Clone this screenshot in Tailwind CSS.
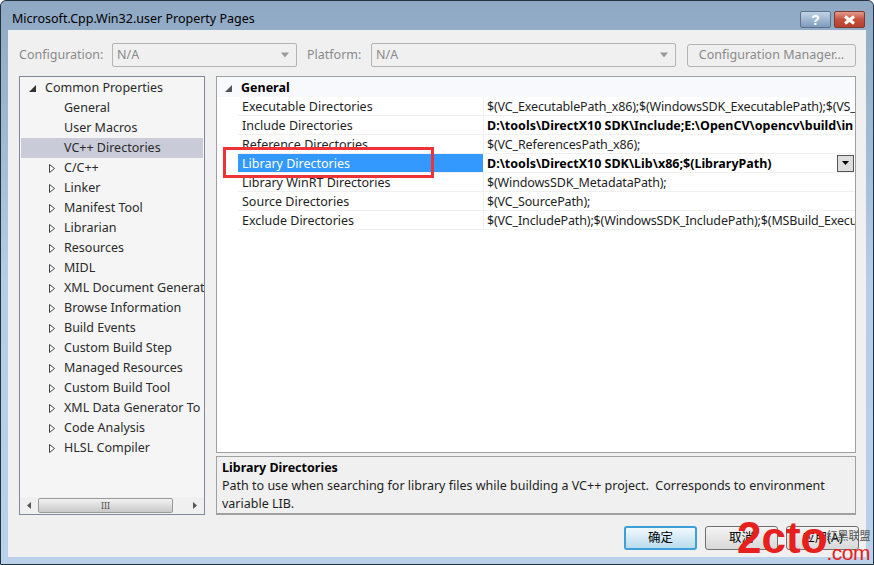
<!DOCTYPE html>
<html lang="en">
<head>
    <meta charset="UTF-8">
    <title>Microsoft.Cpp.Win32.user Property Pages</title>
    <script src="https://cdn.jsdelivr.net/npm/@tailwindcss/browser@4"></script>
</head>
<body class="w-[874px] h-[565px] overflow-hidden bg-white font-['Noto_Sans','Noto_Sans_CJK_SC',sans-serif] text-[12.5px] text-[#1e1e1e]">

    <!-- Window frame -->
    <div class="relative w-[874px] h-[565px] flex flex-col rounded-t-[6px] border border-[#24343f] bg-gradient-to-b from-[#8fa9c4] via-[#b5cde6] to-[#b9d1ea] px-[7px] pb-[7px]">

        <!-- Title bar -->
        <div class="h-[29px] shrink-0 flex items-start justify-between">
            <div class="pl-[4px] pt-[6px] leading-[24px] text-black">Microsoft.Cpp.Win32.user Property Pages</div>
            <div class="flex gap-[3px] pt-[10px] pr-[1px]">
                <div class="w-[31px] h-[17px] flex items-center justify-center rounded-[2px] border border-[#5f7388] bg-gradient-to-b from-[#c2d3e6] to-[#7e9cbd]">
                    <span class="font-['Liberation_Sans',sans-serif] font-bold text-[14px] leading-none text-white">?</span>
                </div>
                <div class="w-[31px] h-[17px] flex items-center justify-center rounded-[2px] border border-[#7a3a34] bg-gradient-to-b from-[#e39a8e] via-[#c4503f] to-[#b8402f]">
                    <svg width="13" height="10" viewBox="0 0 13 10"><path d="M2 1.5 L11 8.5 M11 1.5 L2 8.5" stroke="#fff" stroke-width="3" fill="none"/></svg>
                </div>
            </div>
        </div>

        <!-- Dialog body -->
        <div class="flex-1 min-h-0 flex flex-col bg-[#f0f0f0] pl-[11px] pr-[10px] pt-[13px]">

            <!-- Configuration row -->
            <div class="h-[24px] shrink-0 flex items-center text-[#8a8a8a]">
                <span class="w-[93px]">Configuration:</span>
                <div class="w-[185px] h-[24px] flex items-center justify-between rounded-[2px] border border-[#b4b4b4] pl-[4px] pr-[6px]">
                    <span>N/A</span>
                    <svg width="10" height="6" viewBox="0 0 10 6"><path d="M1 0.5 H9 L5 5.5 Z" fill="#9a9a9a"/></svg>
                </div>
                <span class="ml-[10px] w-[64px]">Platform:</span>
                <div class="w-[305px] h-[24px] flex items-center justify-between rounded-[2px] border border-[#b4b4b4] pl-[4px] pr-[6px]">
                    <span>N/A</span>
                    <svg width="10" height="6" viewBox="0 0 10 6"><path d="M1 0.5 H9 L5 5.5 Z" fill="#9a9a9a"/></svg>
                </div>
                <div class="ml-[11px] w-[169px] h-[23px] flex items-center justify-center rounded-[3px] border border-[#b4b4b4] bg-[#efefef]">Configuration Manager...</div>
            </div>

            <!-- Tree and grid -->
            <div class="flex gap-[11px] mt-[9px]">

                <!-- Tree -->
                <div class="w-[186px] h-[439px] shrink-0 flex flex-col border border-[#82879a] bg-[#f5f5f5]">
                    <div class="flex-1 overflow-hidden pt-[1px] text-[#2a2a2a]">
                        <div class="h-[20px] flex items-center whitespace-nowrap pl-[9px]">
                            <svg class="w-[7px] h-[7px] mr-[9px]" viewBox="0 0 7 7"><path d="M7 0 V7 H0 Z" fill="#333"/></svg>Common Properties
                        </div>
                        <div class="h-[20px] flex items-center pl-[44px]">General</div>
                        <div class="h-[20px] flex items-center pl-[44px]">User Macros</div>
                        <div class="h-[20px] flex items-center pl-[44px] mx-[1px] bg-[#c9cbd9]"><span class="-ml-[1px]">VC++ Directories</span></div>
                        <div class="h-[20px] flex items-center whitespace-nowrap overflow-hidden pl-[29px]"><svg class="w-[6px] h-[9px] mr-[9px] shrink-0" viewBox="0 0 6 9"><path d="M0.5 0.5 L5.5 4.5 L0.5 8.5 Z" fill="#fff" stroke="#444"/></svg>C/C++</div>
                        <div class="h-[20px] flex items-center whitespace-nowrap overflow-hidden pl-[29px]"><svg class="w-[6px] h-[9px] mr-[9px] shrink-0" viewBox="0 0 6 9"><path d="M0.5 0.5 L5.5 4.5 L0.5 8.5 Z" fill="#fff" stroke="#444"/></svg>Linker</div>
                        <div class="h-[20px] flex items-center whitespace-nowrap overflow-hidden pl-[29px]"><svg class="w-[6px] h-[9px] mr-[9px] shrink-0" viewBox="0 0 6 9"><path d="M0.5 0.5 L5.5 4.5 L0.5 8.5 Z" fill="#fff" stroke="#444"/></svg>Manifest Tool</div>
                        <div class="h-[20px] flex items-center whitespace-nowrap overflow-hidden pl-[29px]"><svg class="w-[6px] h-[9px] mr-[9px] shrink-0" viewBox="0 0 6 9"><path d="M0.5 0.5 L5.5 4.5 L0.5 8.5 Z" fill="#fff" stroke="#444"/></svg>Librarian</div>
                        <div class="h-[20px] flex items-center whitespace-nowrap overflow-hidden pl-[29px]"><svg class="w-[6px] h-[9px] mr-[9px] shrink-0" viewBox="0 0 6 9"><path d="M0.5 0.5 L5.5 4.5 L0.5 8.5 Z" fill="#fff" stroke="#444"/></svg>Resources</div>
                        <div class="h-[20px] flex items-center whitespace-nowrap overflow-hidden pl-[29px]"><svg class="w-[6px] h-[9px] mr-[9px] shrink-0" viewBox="0 0 6 9"><path d="M0.5 0.5 L5.5 4.5 L0.5 8.5 Z" fill="#fff" stroke="#444"/></svg>MIDL</div>
                        <div class="h-[20px] flex items-center whitespace-nowrap overflow-hidden pl-[29px]"><svg class="w-[6px] h-[9px] mr-[9px] shrink-0" viewBox="0 0 6 9"><path d="M0.5 0.5 L5.5 4.5 L0.5 8.5 Z" fill="#fff" stroke="#444"/></svg>XML Document Generat</div>
                        <div class="h-[20px] flex items-center whitespace-nowrap overflow-hidden pl-[29px]"><svg class="w-[6px] h-[9px] mr-[9px] shrink-0" viewBox="0 0 6 9"><path d="M0.5 0.5 L5.5 4.5 L0.5 8.5 Z" fill="#fff" stroke="#444"/></svg>Browse Information</div>
                        <div class="h-[20px] flex items-center whitespace-nowrap overflow-hidden pl-[29px]"><svg class="w-[6px] h-[9px] mr-[9px] shrink-0" viewBox="0 0 6 9"><path d="M0.5 0.5 L5.5 4.5 L0.5 8.5 Z" fill="#fff" stroke="#444"/></svg>Build Events</div>
                        <div class="h-[20px] flex items-center whitespace-nowrap overflow-hidden pl-[29px]"><svg class="w-[6px] h-[9px] mr-[9px] shrink-0" viewBox="0 0 6 9"><path d="M0.5 0.5 L5.5 4.5 L0.5 8.5 Z" fill="#fff" stroke="#444"/></svg>Custom Build Step</div>
                        <div class="h-[20px] flex items-center whitespace-nowrap overflow-hidden pl-[29px]"><svg class="w-[6px] h-[9px] mr-[9px] shrink-0" viewBox="0 0 6 9"><path d="M0.5 0.5 L5.5 4.5 L0.5 8.5 Z" fill="#fff" stroke="#444"/></svg>Managed Resources</div>
                        <div class="h-[20px] flex items-center whitespace-nowrap overflow-hidden pl-[29px]"><svg class="w-[6px] h-[9px] mr-[9px] shrink-0" viewBox="0 0 6 9"><path d="M0.5 0.5 L5.5 4.5 L0.5 8.5 Z" fill="#fff" stroke="#444"/></svg>Custom Build Tool</div>
                        <div class="h-[20px] flex items-center whitespace-nowrap overflow-hidden pl-[29px]"><svg class="w-[6px] h-[9px] mr-[9px] shrink-0" viewBox="0 0 6 9"><path d="M0.5 0.5 L5.5 4.5 L0.5 8.5 Z" fill="#fff" stroke="#444"/></svg>XML Data Generator To</div>
                        <div class="h-[20px] flex items-center whitespace-nowrap overflow-hidden pl-[29px]"><svg class="w-[6px] h-[9px] mr-[9px] shrink-0" viewBox="0 0 6 9"><path d="M0.5 0.5 L5.5 4.5 L0.5 8.5 Z" fill="#fff" stroke="#444"/></svg>Code Analysis</div>
                        <div class="h-[20px] flex items-center whitespace-nowrap overflow-hidden pl-[29px]"><svg class="w-[6px] h-[9px] mr-[9px] shrink-0" viewBox="0 0 6 9"><path d="M0.5 0.5 L5.5 4.5 L0.5 8.5 Z" fill="#fff" stroke="#444"/></svg>HLSL Compiler</div>
                    </div>
                    <!-- Horizontal scrollbar -->
                    <div class="h-[17px] shrink-0 flex items-center bg-[#f0f0f0]">
                        <svg class="w-[18px] h-[9px] shrink-0" viewBox="0 0 18 9"><path d="M11 1 V8 L7 4.5 Z" fill="#555"/></svg>
                        <div class="w-[135px] h-[15px] flex items-center justify-center rounded-[2px] border border-[#9a9a9a] bg-gradient-to-b from-[#f2f2f2] to-[#c9c9c9] text-[9px] leading-none text-[#555]">III</div>
                        <div class="flex-1"></div>
                        <svg class="w-[18px] h-[9px] shrink-0" viewBox="0 0 18 9"><path d="M7 1 V8 L11 4.5 Z" fill="#555"/></svg>
                    </div>
                </div>

                <!-- Grid and description -->
                <div class="w-[640px] flex flex-col gap-[3px]">
                    <div class="h-[377px] overflow-hidden border border-[#a0a0a0] bg-white">
                        <div class="h-[20px] flex items-center bg-[#f7f9fc] pl-[8px] pt-[2px] font-bold text-black">
                            <svg class="w-[7px] h-[7px] mr-[9px]" viewBox="0 0 7 7"><path d="M7 0 V7 H0 Z" fill="#555"/></svg>General
                        </div>
                        <div class="h-[19px] flex ml-[21px] border-b border-[#f0f0f0]">
                            <div class="w-[245px] shrink-0 pl-[4px] leading-[20px]">Executable Directories</div>
                            <div class="flex-1 whitespace-nowrap overflow-hidden border-l border-[#f0f0f0] pl-[3px] leading-[20px] tracking-[-0.15px]">$(VC_ExecutablePath_x86);$(WindowsSDK_ExecutablePath);$(VS_</div>
                        </div>
                        <div class="h-[19px] flex ml-[21px] border-b border-[#f0f0f0]">
                            <div class="w-[245px] shrink-0 pl-[4px] leading-[20px]">Include Directories</div>
                            <div class="flex-1 whitespace-nowrap overflow-hidden border-l border-[#f0f0f0] pl-[3px] leading-[20px] font-bold text-black">D:\tools\DirectX10 SDK\Include;E:\OpenCV\opencv\build\in</div>
                        </div>
                        <div class="h-[19px] flex ml-[21px] border-b border-[#f0f0f0]">
                            <div class="w-[245px] shrink-0 pl-[4px] leading-[20px]">Reference Directories</div>
                            <div class="flex-1 whitespace-nowrap overflow-hidden border-l border-[#f0f0f0] pl-[3px] leading-[20px] tracking-[-0.15px]">$(VC_ReferencesPath_x86);</div>
                        </div>
                        <div class="h-[19px] flex ml-[21px] border-b border-[#f0f0f0]">
                            <div class="w-[245px] shrink-0 pl-[4px] leading-[20px] bg-[#3399ff] text-white">Library Directories</div>
                            <div class="flex-1 flex items-center justify-between whitespace-nowrap overflow-hidden pl-[4px] pr-[1px] font-bold text-black">
                                <span class="mt-[2px]">D:\tools\DirectX10 SDK\Lib\x86;$(LibraryPath)</span>
                                <div class="w-[17px] h-[17px] flex items-center justify-center border border-[#555] bg-[#dedede]">
                                    <svg width="7" height="4" viewBox="0 0 7 4"><path d="M0 0 H7 L3.5 4 Z" fill="#000"/></svg>
                                </div>
                            </div>
                        </div>
                        <div class="h-[19px] flex ml-[21px] border-b border-[#f0f0f0]">
                            <div class="w-[245px] shrink-0 pl-[4px] leading-[20px]">Library WinRT Directories</div>
                            <div class="flex-1 whitespace-nowrap overflow-hidden border-l border-[#f0f0f0] pl-[3px] leading-[20px] tracking-[-0.15px]">$(WindowsSDK_MetadataPath);</div>
                        </div>
                        <div class="h-[19px] flex ml-[21px] border-b border-[#f0f0f0]">
                            <div class="w-[245px] shrink-0 pl-[4px] leading-[20px]">Source Directories</div>
                            <div class="flex-1 whitespace-nowrap overflow-hidden border-l border-[#f0f0f0] pl-[3px] leading-[20px] tracking-[-0.15px]">$(VC_SourcePath);</div>
                        </div>
                        <div class="h-[19px] flex ml-[21px] border-b border-[#f0f0f0]">
                            <div class="w-[245px] shrink-0 pl-[4px] leading-[20px]">Exclude Directories</div>
                            <div class="flex-1 whitespace-nowrap overflow-hidden border-l border-[#f0f0f0] pl-[3px] leading-[20px] tracking-[-0.15px]">$(VC_IncludePath);$(WindowsSDK_IncludePath);$(MSBuild_Execu</div>
                        </div>
                    </div>
                    <div class="h-[59px] border border-[#a0a0a0] border-b-2 bg-[#f0f0f0] pl-[5px] pt-[2px] leading-[18px]">
                        <div class="font-bold text-black">Library Directories</div>
                        <div class="w-[620px]">Path to use when searching for library files while building a VC++ project.&nbsp; Corresponds to environment variable LIB.</div>
                    </div>
                </div>
            </div>

            <!-- Footer buttons -->
            <div class="flex justify-end gap-[8px] mt-[11px] -mr-[3px]">
                <div class="w-[73px] h-[24px] flex items-center justify-center rounded-[3px] border-2 border-[#3c9fd8] bg-gradient-to-b from-[#f2f9fd] to-[#b9dcee] text-black">确定</div>
                <div class="w-[73px] h-[24px] flex items-center justify-center rounded-[3px] border border-[#707070] bg-gradient-to-b from-[#f4f4f4] to-[#d8d8d8] text-black">取消</div>
                <div class="w-[73px] h-[24px] flex items-center justify-center rounded-[3px] border border-[#707070] bg-gradient-to-b from-[#f4f4f4] to-[#d8d8d8] text-black">应用(A)</div>
            </div>
        </div>

        <!-- Red callout around the selected row -->
        <div class="absolute left-[222px] top-[146px] w-[211px] h-[31px] border-[3px] border-[#ee3338]"></div>

        <!-- Watermark -->
        <div class="absolute left-[736px] top-[514px] h-[46px] flex items-end font-['Liberation_Sans',sans-serif] text-[#e6201c]">
            <span class="text-[44px] font-bold leading-[46px]">2cto</span>
            <div class="flex flex-col items-start -ml-[1px]">
                <span class="font-['Noto_Sans_CJK_SC',sans-serif] text-[11px] leading-[18px] text-[#555]">红黑联盟</span>
                <span class="text-[21px] leading-[17px] tracking-[-0.5px]">.com</span>
            </div>
        </div>
    </div>

</body>
</html>
